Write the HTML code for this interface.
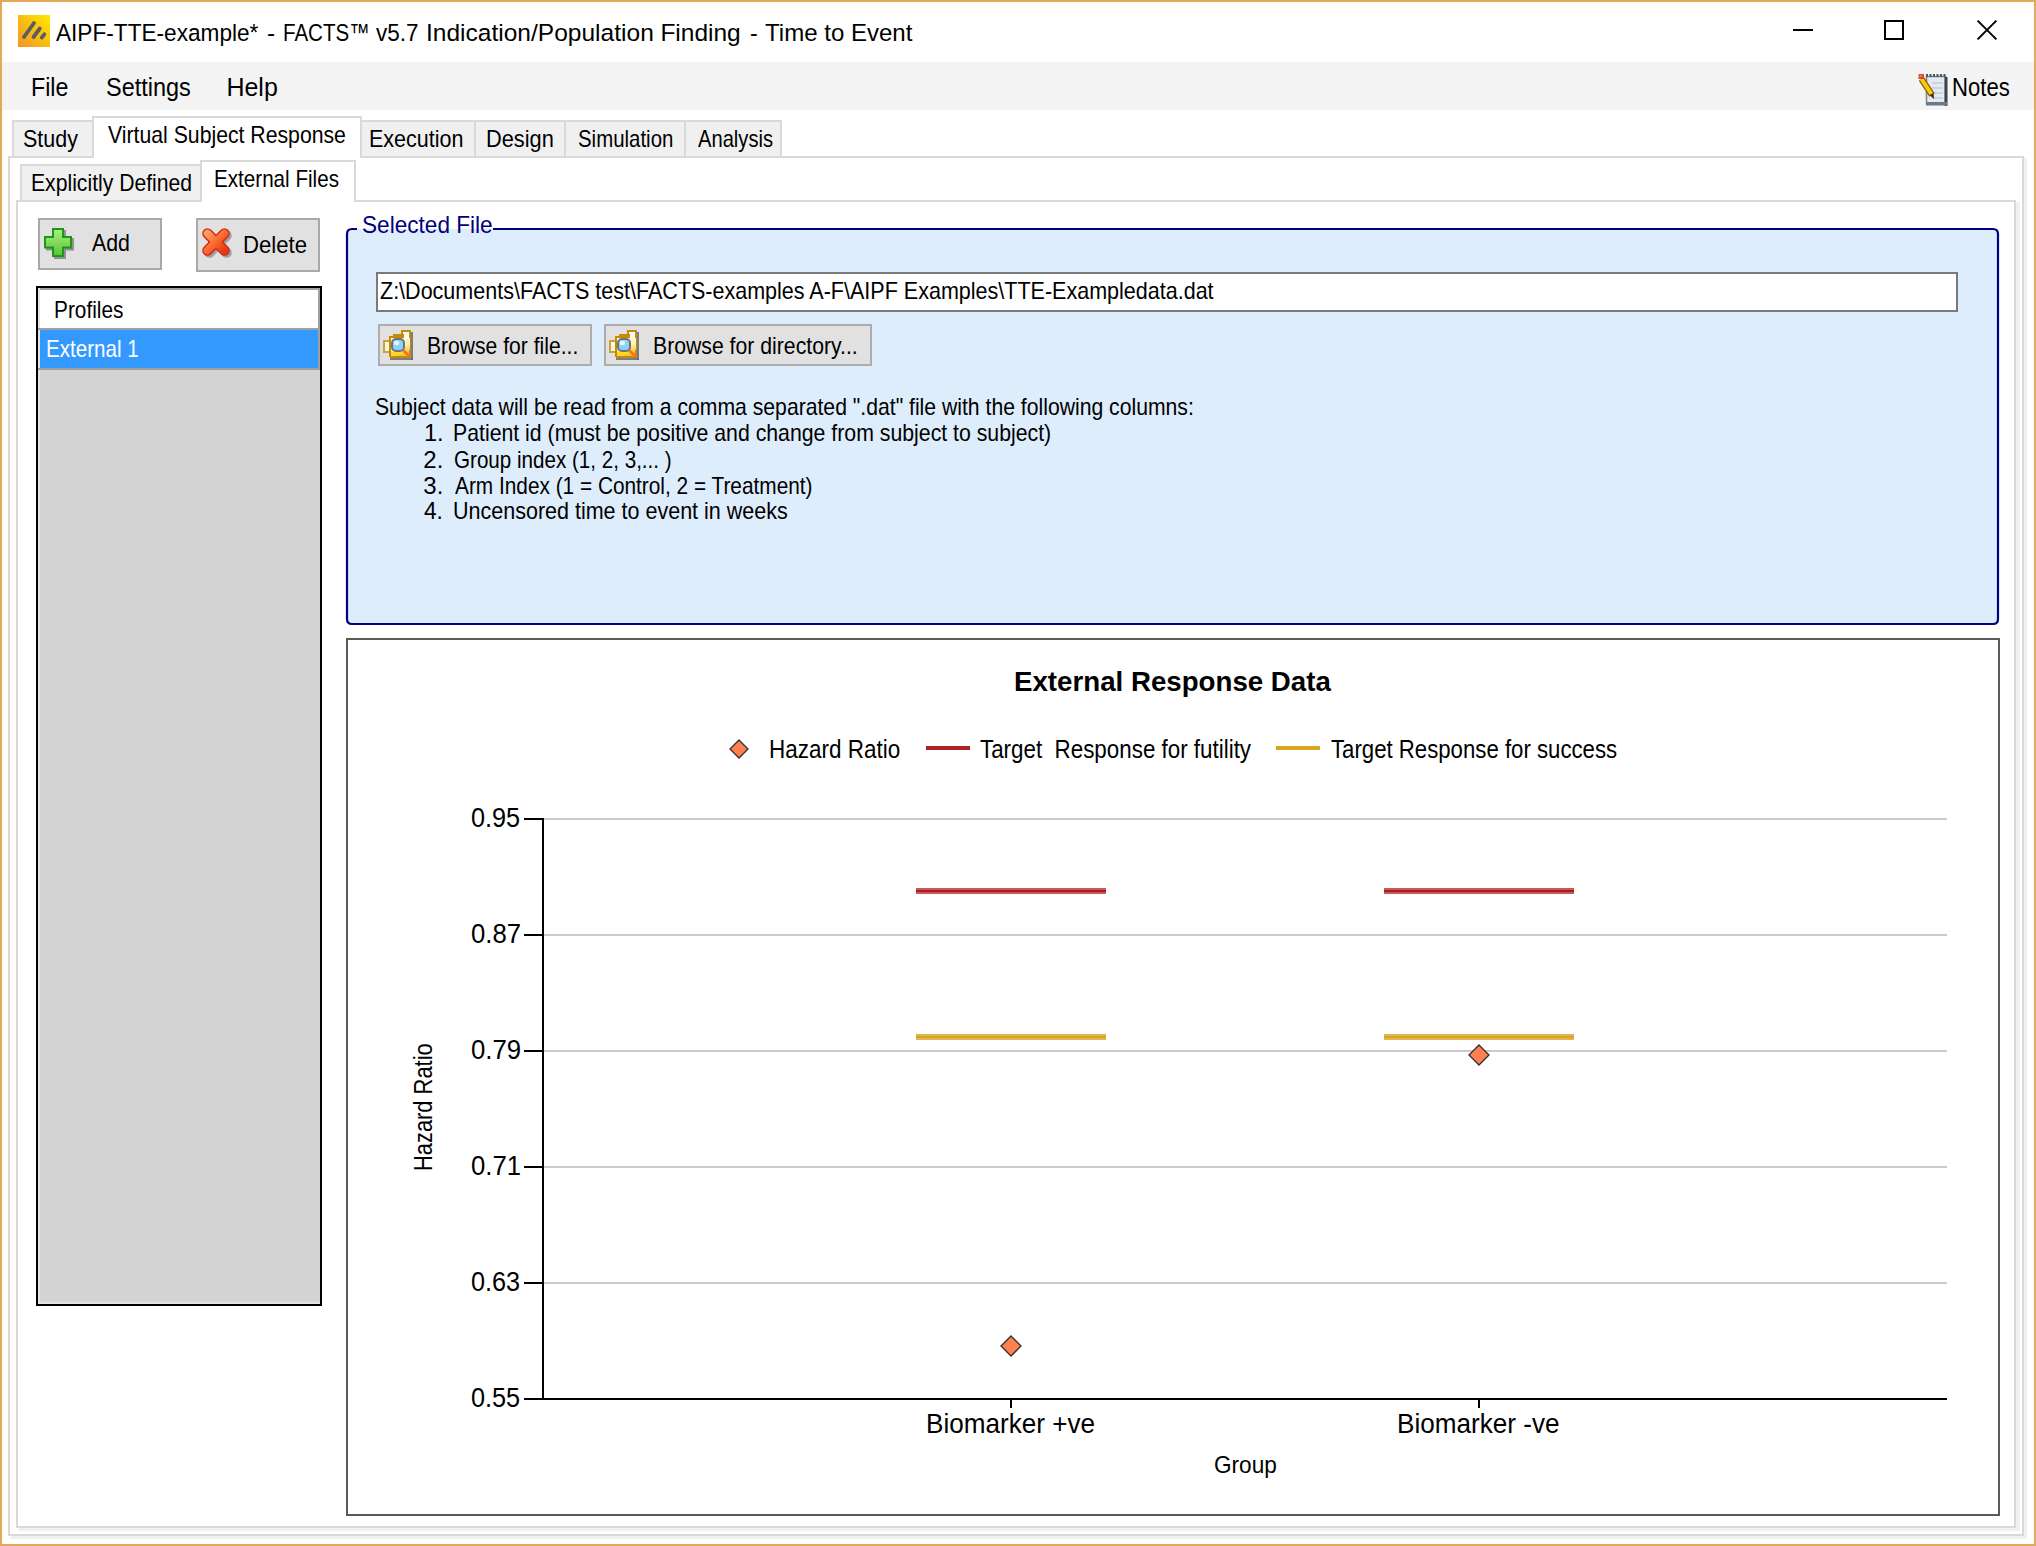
<!DOCTYPE html>
<html><head><meta charset="utf-8"><title>FACTS</title>
<style>html,body{margin:0;padding:0;width:2036px;height:1546px;overflow:hidden;font-family:"Liberation Sans", sans-serif;}</style>
</head><body><div style="position:relative;width:2036px;height:1546px;overflow:hidden">
<div style="position:absolute;left:0px;top:0px;width:2036px;height:1546px;background:#ffffff"></div>
<svg style="position:absolute;left:18px;top:15px" width="32" height="32" viewBox="0 0 32 32">
<defs><linearGradient id="ig" x1="0" y1="1" x2="1" y2="0"><stop offset="0" stop-color="#f39223"/><stop offset="1" stop-color="#ffea00"/></linearGradient></defs>
<rect width="32" height="32" fill="url(#ig)"/>
<g stroke="#5c5c5c" stroke-width="3.8" stroke-linecap="round">
<line x1="6" y1="22" x2="16" y2="8"/><line x1="15.5" y1="22" x2="21.8" y2="13.5"/><line x1="23.8" y1="22.5" x2="26.3" y2="19.3"/></g></svg>
<div style="position:absolute;left:55.6px;top:21.26px;font-size:24.5px;line-height:24.5px;font-weight:normal;color:#000;white-space:pre;transform:scaleX(0.9233);transform-origin:0 0;">AIPF-TTE-example*</div>
<div style="position:absolute;left:267.0px;top:21.26px;font-size:24.5px;line-height:24.5px;font-weight:normal;color:#000;white-space:pre;transform:scaleX(1.0000);transform-origin:0 0;">-</div>
<div style="position:absolute;left:282.62323232323234px;top:21.26px;font-size:24.5px;line-height:24.5px;font-weight:normal;color:#000;white-space:pre;transform:scaleX(0.8384);transform-origin:0 0;">FACTS™</div>
<div style="position:absolute;left:376.1px;top:21.26px;font-size:24.5px;line-height:24.5px;font-weight:normal;color:#000;white-space:pre;transform:scaleX(0.9178);transform-origin:0 0;">v5.7</div>
<div style="position:absolute;left:426.3973214285714px;top:21.26px;font-size:24.5px;line-height:24.5px;font-weight:normal;color:#000;white-space:pre;transform:scaleX(1.0013);transform-origin:0 0;">Indication/Population</div>
<div style="position:absolute;left:660.4px;top:21.26px;font-size:24.5px;line-height:24.5px;font-weight:normal;color:#000;white-space:pre;transform:scaleX(1.0000);transform-origin:0 0;">Finding</div>
<div style="position:absolute;left:749.75px;top:21.26px;font-size:24.5px;line-height:24.5px;font-weight:normal;color:#000;white-space:pre;transform:scaleX(0.9500);transform-origin:0 0;">-</div>
<div style="position:absolute;left:765.3px;top:21.26px;font-size:24.5px;line-height:24.5px;font-weight:normal;color:#000;white-space:pre;transform:scaleX(0.9813);transform-origin:0 0;">Time to Event</div>
<div style="position:absolute;left:1793px;top:29px;width:20px;height:2px;background:#000"></div>
<div style="position:absolute;left:1884px;top:20px;width:20px;height:20px;border:2px solid #000;box-sizing:border-box"></div>
<svg style="position:absolute;left:1976px;top:19px" width="22" height="22" viewBox="0 0 22 22"><g stroke="#000" stroke-width="2"><line x1="1.6" y1="1.6" x2="20.4" y2="20.4"/><line x1="20.4" y1="1.6" x2="1.6" y2="20.4"/></g></svg>
<div style="position:absolute;left:2px;top:62px;width:2032px;height:48px;background:#f4f4f4"></div>
<div style="position:absolute;left:31.142105263157895px;top:74.64px;font-size:25px;line-height:25px;font-weight:normal;color:#000;white-space:pre;transform:scaleX(0.9289);transform-origin:0 0;">File</div>
<div style="position:absolute;left:105.56179775280899px;top:74.64px;font-size:25px;line-height:25px;font-weight:normal;color:#000;white-space:pre;transform:scaleX(0.9382);transform-origin:0 0;">Settings</div>
<div style="position:absolute;left:226.4px;top:74.64px;font-size:25px;line-height:25px;font-weight:normal;color:#000;white-space:pre;transform:scaleX(1.0000);transform-origin:0 0;">Help</div>
<div style="position:absolute;left:1952.231746031746px;top:74.64px;font-size:25px;line-height:25px;font-weight:normal;color:#000;white-space:pre;transform:scaleX(0.8841);transform-origin:0 0;">Notes</div>
<svg style="position:absolute;left:1917px;top:73px" width="34" height="34" viewBox="0 0 34 34">
<rect x="9.5" y="3.5" width="19" height="27" fill="#e4e9f2" stroke="#7a8390" stroke-width="1.5"/>
<rect x="27.5" y="4" width="3" height="29" fill="#3a424c"/>
<rect x="9" y="29" width="21" height="3.5" fill="#6d7886"/>
<g stroke="#c3cbd9" stroke-width="1.5"><line x1="15" y1="10" x2="26" y2="10"/><line x1="15" y1="15" x2="26" y2="15"/><line x1="15" y1="20" x2="26" y2="20"/><line x1="15" y1="25" x2="26" y2="25"/></g>
<line x1="9" y1="2.5" x2="29" y2="2.5" stroke="#4e5660" stroke-width="3" stroke-dasharray="2 1.5"/>
<line x1="4.5" y1="6" x2="15" y2="22" stroke="#8a6000" stroke-width="6.5"/>
<line x1="4.5" y1="6" x2="15" y2="22" stroke="#f6cc10" stroke-width="4"/>
<path d="M12.5 22 L16.5 20 L17 26 Z" fill="#3a2a10"/>
<rect x="1.5" y="1" width="5.5" height="5" fill="#d8493a"/><rect x="2.5" y="2" width="2.5" height="2" fill="#ff7060"/>
</svg>
<div style="position:absolute;left:8px;top:156px;width:2016px;height:1380px;border:2px solid #d9d9d9;box-sizing:border-box;background:#fff"></div>
<div style="position:absolute;left:2024px;top:158px;width:3px;height:1380px;background:#f0f0f0"></div>
<div style="position:absolute;left:10px;top:1536px;width:2017px;height:3px;background:#f0f0f0"></div>
<div style="position:absolute;left:12px;top:120px;width:82px;height:38px;background:#f0f0f0;border:2px solid #d9d9d9;box-sizing:border-box"></div>
<div style="position:absolute;left:23.205000000000002px;top:127.48px;font-size:24px;line-height:24px;font-weight:normal;color:#000;white-space:pre;transform:scaleX(0.8950);transform-origin:0 0;">Study</div>
<div style="position:absolute;left:360px;top:120px;width:116px;height:38px;background:#f0f0f0;border:2px solid #d9d9d9;box-sizing:border-box"></div>
<div style="position:absolute;left:369.0078431372549px;top:127.18px;font-size:24px;line-height:24px;font-weight:normal;color:#000;white-space:pre;transform:scaleX(0.8961);transform-origin:0 0;">Execution</div>
<div style="position:absolute;left:474px;top:120px;width:92px;height:38px;background:#f0f0f0;border:2px solid #d9d9d9;box-sizing:border-box"></div>
<div style="position:absolute;left:486.18591549295775px;top:127.18px;font-size:24px;line-height:24px;font-weight:normal;color:#000;white-space:pre;transform:scaleX(0.9070);transform-origin:0 0;">Design</div>
<div style="position:absolute;left:564px;top:120px;width:122px;height:38px;background:#f0f0f0;border:2px solid #d9d9d9;box-sizing:border-box"></div>
<div style="position:absolute;left:577.5490909090909px;top:127.18px;font-size:24px;line-height:24px;font-weight:normal;color:#000;white-space:pre;transform:scaleX(0.8509);transform-origin:0 0;">Simulation</div>
<div style="position:absolute;left:684px;top:120px;width:98px;height:38px;background:#f0f0f0;border:2px solid #d9d9d9;box-sizing:border-box"></div>
<div style="position:absolute;left:698.0px;top:127.18px;font-size:24px;line-height:24px;font-weight:normal;color:#000;white-space:pre;transform:scaleX(0.8393);transform-origin:0 0;">Analysis</div>
<div style="position:absolute;left:92px;top:116px;width:270px;height:42px;background:#ffffff;border:2px solid #d9d9d9;border-bottom:none;box-sizing:border-box"></div>
<div style="position:absolute;left:108.0px;top:123.08px;font-size:24px;line-height:24px;font-weight:normal;color:#000;white-space:pre;transform:scaleX(0.8843);transform-origin:0 0;">Virtual Subject Response</div>
<div style="position:absolute;left:16px;top:200px;width:2000px;height:1328px;border:2px solid #d9d9d9;box-sizing:border-box;background:#fff"></div>
<div style="position:absolute;left:2016px;top:202px;width:4px;height:1328px;background:#f0f0f0"></div>
<div style="position:absolute;left:18px;top:1528px;width:2002px;height:3px;background:#f0f0f0"></div>
<div style="position:absolute;left:20px;top:164px;width:182px;height:38px;background:#f0f0f0;border:2px solid #d9d9d9;box-sizing:border-box"></div>
<div style="position:absolute;left:30.636871508379887px;top:170.68px;font-size:24px;line-height:24px;font-weight:normal;color:#000;white-space:pre;transform:scaleX(0.8816);transform-origin:0 0;">Explicitly Defined</div>
<div style="position:absolute;left:200px;top:160px;width:156px;height:42px;background:#ffffff;border:2px solid #d9d9d9;border-bottom:none;box-sizing:border-box"></div>
<div style="position:absolute;left:214.28111888111889px;top:166.68px;font-size:24px;line-height:24px;font-weight:normal;color:#000;white-space:pre;transform:scaleX(0.8594);transform-origin:0 0;">External Files</div>
<div style="position:absolute;left:38px;top:218px;width:124px;height:52px;background:#e1e1e1;border:2px solid #a9a9a9;box-sizing:border-box"></div>
<div style="position:absolute;left:196px;top:218px;width:124px;height:54px;background:#e1e1e1;border:2px solid #a9a9a9;box-sizing:border-box"></div>
<svg style="position:absolute;left:42px;top:226px" width="36" height="36" viewBox="0 0 36 36">
<defs><linearGradient id="pg" x1="0" y1="0" x2="0" y2="1"><stop offset="0" stop-color="#a8f07a"/><stop offset="1" stop-color="#5cc43a"/></linearGradient></defs>
<path d="M10 2h12v8h8v12.5h-8v8.5h-12v-8.5h-8v-12.5h8z" transform="translate(2,2)" fill="#444" opacity="0.5"/>
<path d="M10 2h12v8h8v12.5h-8v8.5h-12v-8.5h-8v-12.5h8z" fill="#1e961e"/>
<path d="M12 4h8v8h8v8.5h-8v8.5h-8v-8.5h-8v-8.5h8z" fill="url(#pg)"/>
</svg>
<div style="position:absolute;left:92.0px;top:231.38px;font-size:24px;line-height:24px;font-weight:normal;color:#000;white-space:pre;transform:scaleX(0.8878);transform-origin:0 0;">Add</div>
<svg style="position:absolute;left:200px;top:226px" width="36" height="36" viewBox="0 0 36 36">
<defs><linearGradient id="xg" x1="0" y1="0" x2="1" y2="1"><stop offset="0" stop-color="#ff9c60"/><stop offset="0.5" stop-color="#fb6a2c"/><stop offset="1" stop-color="#e83a12"/></linearGradient></defs>
<g stroke-linecap="round">
<g stroke="#444" stroke-width="10.5" opacity="0.4"><line x1="9.5" y1="9.5" x2="26.5" y2="26.5"/><line x1="26.5" y1="9.5" x2="9.5" y2="26.5"/></g>
<g stroke="#cf2a1a" stroke-width="10.5"><line x1="7.5" y1="7.5" x2="24.5" y2="24.5"/><line x1="24.5" y1="7.5" x2="7.5" y2="24.5"/></g>
<g stroke="url(#xg)" stroke-width="7.5"><line x1="7.5" y1="7.5" x2="24.5" y2="24.5"/><line x1="24.5" y1="7.5" x2="7.5" y2="24.5"/></g>
</g></svg>
<div style="position:absolute;left:242.65454545454546px;top:233.28px;font-size:24px;line-height:24px;font-weight:normal;color:#000;white-space:pre;transform:scaleX(0.9227);transform-origin:0 0;">Delete</div>
<div style="position:absolute;left:36px;top:286px;width:286px;height:1020px;background:#d3d3d3;border:2px solid #000;box-sizing:border-box"></div>
<div style="position:absolute;left:38px;top:288px;width:282px;height:2px;background:#a0a0a0"></div>
<div style="position:absolute;left:38px;top:288px;width:2px;height:1016px;background:#e3e3e3"></div>
<div style="position:absolute;left:40px;top:290px;width:279px;height:38px;background:#ffffff"></div>
<div style="position:absolute;left:38px;top:328px;width:282px;height:2px;background:#a0a0a0"></div>
<div style="position:absolute;left:40px;top:330px;width:279px;height:38px;background:#3399ff"></div>
<div style="position:absolute;left:38px;top:368px;width:282px;height:2px;background:#a0a0a0"></div>
<div style="position:absolute;left:318px;top:290px;width:2px;height:78px;background:#a0a0a0"></div>
<div style="position:absolute;left:38px;top:1302px;width:282px;height:2px;background:#e3e3e3"></div>
<div style="position:absolute;left:54.164935064935065px;top:297.68px;font-size:24px;line-height:24px;font-weight:normal;color:#000;white-space:pre;transform:scaleX(0.8675);transform-origin:0 0;">Profiles</div>
<div style="position:absolute;left:45.885714285714286px;top:337.38px;font-size:24px;line-height:24px;font-weight:normal;color:#ffffff;white-space:pre;transform:scaleX(0.8571);transform-origin:0 0;">External 1</div>
<svg style="position:absolute;left:345px;top:227px" width="1656" height="400" viewBox="0 0 1656 400">
<path d="M 12 2 L 7 2 Q 2 2 2 7 L 2 392 Q 2 397 7 397 L 1648 397 Q 1653 397 1653 392 L 1653 7 Q 1653 2 1648 2 L 148 2" fill="#deedfc" stroke="#000080" stroke-width="2.2"/>
</svg>
<div style="position:absolute;left:376px;top:272px;width:1582px;height:40px;background:#fff;border:2px solid #7a7a7a;box-sizing:border-box"></div>
<div style="position:absolute;left:362.4583941605839px;top:213.18px;font-size:24px;line-height:24px;font-weight:normal;color:#000080;white-space:pre;transform:scaleX(0.9416);transform-origin:0 0;">Selected File</div>
<div style="position:absolute;left:380.10333692142086px;top:279.48px;font-size:24px;line-height:24px;font-weight:normal;color:#000;white-space:pre;transform:scaleX(0.8967);transform-origin:0 0;">Z:\Documents\FACTS test\FACTS-examples A-F\AIPF Examples\TTE-Exampledata.dat</div>
<div style="position:absolute;left:378px;top:324px;width:214px;height:42px;background:#e1e1e1;border:2px solid #adadad;box-sizing:border-box"></div>
<div style="position:absolute;left:604px;top:324px;width:268px;height:42px;background:#e1e1e1;border:2px solid #adadad;box-sizing:border-box"></div>
<svg style="position:absolute;left:383px;top:330px" width="32" height="32" viewBox="0 0 32 32">
<defs><linearGradient id="fg383" x1="0" y1="0" x2="0.3" y2="1"><stop offset="0" stop-color="#fffef5"/><stop offset="0.55" stop-color="#fff0a8"/><stop offset="1" stop-color="#f5c030"/></linearGradient></defs>
<rect x="28" y="2" width="2" height="28" fill="#60656c" opacity="0.8"/>
<rect x="7" y="28" width="23" height="2" fill="#60656c" opacity="0.8"/>
<rect x="19" y="1" width="8" height="26" fill="#fffdf2" stroke="#c48a08" stroke-width="2"/>
<rect x="11" y="5" width="9" height="22" fill="#fff4c8" stroke="#c48a08" stroke-width="2"/>
<rect x="1" y="11" width="6" height="11" fill="#fff8dc" stroke="#c8a040" stroke-width="2"/>
<path d="M7 27 V7 H21" fill="none" stroke="#c48a08" stroke-width="2"/>
<rect x="8" y="8" width="19" height="19" fill="url(#fg383)"/>
<path d="M7 27 H27 V20" fill="none" stroke="#c48a08" stroke-width="2"/>
<rect x="9" y="9" width="12" height="12" rx="4" fill="#8ad4fa" stroke="#727272" stroke-width="2"/>
<rect x="11" y="11" width="5" height="4" rx="1" fill="#e0f6ff"/>
<rect x="8" y="22" width="11" height="2.5" fill="#ffd820"/>
<path d="M20.5 20.5 L26 26" stroke="#ff7020" stroke-width="3"/>
</svg>
<svg style="position:absolute;left:609px;top:330px" width="32" height="32" viewBox="0 0 32 32">
<defs><linearGradient id="fg609" x1="0" y1="0" x2="0.3" y2="1"><stop offset="0" stop-color="#fffef5"/><stop offset="0.55" stop-color="#fff0a8"/><stop offset="1" stop-color="#f5c030"/></linearGradient></defs>
<rect x="28" y="2" width="2" height="28" fill="#60656c" opacity="0.8"/>
<rect x="7" y="28" width="23" height="2" fill="#60656c" opacity="0.8"/>
<rect x="19" y="1" width="8" height="26" fill="#fffdf2" stroke="#c48a08" stroke-width="2"/>
<rect x="11" y="5" width="9" height="22" fill="#fff4c8" stroke="#c48a08" stroke-width="2"/>
<rect x="1" y="11" width="6" height="11" fill="#fff8dc" stroke="#c8a040" stroke-width="2"/>
<path d="M7 27 V7 H21" fill="none" stroke="#c48a08" stroke-width="2"/>
<rect x="8" y="8" width="19" height="19" fill="url(#fg609)"/>
<path d="M7 27 H27 V20" fill="none" stroke="#c48a08" stroke-width="2"/>
<rect x="9" y="9" width="12" height="12" rx="4" fill="#8ad4fa" stroke="#727272" stroke-width="2"/>
<rect x="11" y="11" width="5" height="4" rx="1" fill="#e0f6ff"/>
<rect x="8" y="22" width="11" height="2.5" fill="#ffd820"/>
<path d="M20.5 20.5 L26 26" stroke="#ff7020" stroke-width="3"/>
</svg>
<div style="position:absolute;left:426.8416666666667px;top:333.68px;font-size:24px;line-height:24px;font-weight:normal;color:#000;white-space:pre;transform:scaleX(0.8792);transform-origin:0 0;">Browse for file...</div>
<div style="position:absolute;left:653.2324561403509px;top:333.68px;font-size:24px;line-height:24px;font-weight:normal;color:#000;white-space:pre;transform:scaleX(0.8838);transform-origin:0 0;">Browse for directory...</div>
<div style="position:absolute;left:375.11783783783784px;top:395.48px;font-size:24px;line-height:24px;font-weight:normal;color:#000;white-space:pre;transform:scaleX(0.8822);transform-origin:0 0;">Subject data will be read from a comma separated &quot;.dat&quot; file with the following columns:</div>
<div style="position:absolute;left:423.5375px;top:421.38px;font-size:24px;line-height:24px;font-weight:normal;color:#000;white-space:pre;transform:scaleX(0.9812);transform-origin:0 0;">1.</div>
<div style="position:absolute;left:452.72767857142856px;top:421.38px;font-size:24px;line-height:24px;font-weight:normal;color:#000;white-space:pre;transform:scaleX(0.8862);transform-origin:0 0;">Patient id (must be positive and change from subject to subject)</div>
<div style="position:absolute;left:423.3px;top:447.58px;font-size:24px;line-height:24px;font-weight:normal;color:#000;white-space:pre;transform:scaleX(1.0000);transform-origin:0 0;">2.</div>
<div style="position:absolute;left:453.6414342629482px;top:447.58px;font-size:24px;line-height:24px;font-weight:normal;color:#000;white-space:pre;transform:scaleX(0.8586);transform-origin:0 0;">Group index (1, 2, 3,... )</div>
<div style="position:absolute;left:423.3px;top:473.58px;font-size:24px;line-height:24px;font-weight:normal;color:#000;white-space:pre;transform:scaleX(1.0000);transform-origin:0 0;">3.</div>
<div style="position:absolute;left:454.5px;top:473.58px;font-size:24px;line-height:24px;font-weight:normal;color:#000;white-space:pre;transform:scaleX(0.8674);transform-origin:0 0;">Arm Index (1 = Control, 2 = Treatment)</div>
<div style="position:absolute;left:424.3px;top:499.18px;font-size:24px;line-height:24px;font-weight:normal;color:#000;white-space:pre;transform:scaleX(0.9444);transform-origin:0 0;">4.</div>
<div style="position:absolute;left:452.70754716981133px;top:499.18px;font-size:24px;line-height:24px;font-weight:normal;color:#000;white-space:pre;transform:scaleX(0.8962);transform-origin:0 0;">Uncensored time to event in weeks</div>
<div style="position:absolute;left:346px;top:638px;width:1654px;height:878px;background:#fff;border:2px solid #5a5a5a;box-sizing:border-box"></div>
<div style="position:absolute;left:1013.7231974921631px;top:668.10px;font-size:28px;line-height:28px;font-weight:bold;color:#000;white-space:pre;transform:scaleX(0.9884);transform-origin:0 0;">External Response Data</div>
<svg style="position:absolute;left:729px;top:739px" width="20" height="20" viewBox="0 0 20 20"><path d="M10 1 L19 10 L10 19 L1 10 Z" fill="#ff7f50" stroke="#303030" stroke-width="1.3"/></svg>
<div style="position:absolute;left:769.2711409395973px;top:735.99px;font-size:26px;line-height:26px;font-weight:normal;color:#000;white-space:pre;transform:scaleX(0.8644);transform-origin:0 0;">Hazard Ratio</div>
<div style="position:absolute;left:926px;top:746px;width:44px;height:4px;background:#b22222"></div>
<div style="position:absolute;left:980.0px;top:735.99px;font-size:26px;line-height:26px;font-weight:normal;color:#000;white-space:pre;transform:scaleX(0.8603);transform-origin:0 0;">Target  Response for futility</div>
<div style="position:absolute;left:1276px;top:746px;width:44px;height:4px;background:#daa520"></div>
<div style="position:absolute;left:1331.0px;top:735.99px;font-size:26px;line-height:26px;font-weight:normal;color:#000;white-space:pre;transform:scaleX(0.8533);transform-origin:0 0;">Target Response for success</div>
<div style="position:absolute;left:544px;top:818px;width:1403px;height:2px;background:#cbcbcb"></div>
<div style="position:absolute;left:524px;top:818px;width:20px;height:2px;background:#000"></div>
<div style="position:absolute;left:471.09811320754716px;top:804.30px;font-size:28px;line-height:28px;font-weight:normal;color:#000;white-space:pre;transform:scaleX(0.9019);transform-origin:0 0;">0.95</div>
<div style="position:absolute;left:544px;top:934px;width:1403px;height:2px;background:#cbcbcb"></div>
<div style="position:absolute;left:524px;top:934px;width:20px;height:2px;background:#000"></div>
<div style="position:absolute;left:471.08076923076925px;top:920.30px;font-size:28px;line-height:28px;font-weight:normal;color:#000;white-space:pre;transform:scaleX(0.9192);transform-origin:0 0;">0.87</div>
<div style="position:absolute;left:544px;top:1050px;width:1403px;height:2px;background:#cbcbcb"></div>
<div style="position:absolute;left:524px;top:1050px;width:20px;height:2px;background:#000"></div>
<div style="position:absolute;left:471.08076923076925px;top:1036.30px;font-size:28px;line-height:28px;font-weight:normal;color:#000;white-space:pre;transform:scaleX(0.9192);transform-origin:0 0;">0.79</div>
<div style="position:absolute;left:544px;top:1166px;width:1403px;height:2px;background:#cbcbcb"></div>
<div style="position:absolute;left:524px;top:1166px;width:20px;height:2px;background:#000"></div>
<div style="position:absolute;left:471.08076923076925px;top:1152.30px;font-size:28px;line-height:28px;font-weight:normal;color:#000;white-space:pre;transform:scaleX(0.9192);transform-origin:0 0;">0.71</div>
<div style="position:absolute;left:544px;top:1282px;width:1403px;height:2px;background:#cbcbcb"></div>
<div style="position:absolute;left:524px;top:1282px;width:20px;height:2px;background:#000"></div>
<div style="position:absolute;left:471.09811320754716px;top:1268.30px;font-size:28px;line-height:28px;font-weight:normal;color:#000;white-space:pre;transform:scaleX(0.9019);transform-origin:0 0;">0.63</div>
<div style="position:absolute;left:471.09811320754716px;top:1384.30px;font-size:28px;line-height:28px;font-weight:normal;color:#000;white-space:pre;transform:scaleX(0.9019);transform-origin:0 0;">0.55</div>
<div style="position:absolute;left:524px;top:1398px;width:20px;height:2px;background:#000"></div>
<div style="position:absolute;left:542px;top:818px;width:2px;height:582px;background:#000"></div>
<div style="position:absolute;left:542px;top:1398px;width:1405px;height:2px;background:#000"></div>
<div style="position:absolute;left:1010px;top:1400px;width:2px;height:8px;background:#000"></div>
<div style="position:absolute;left:1478px;top:1400px;width:2px;height:8px;background:#000"></div>
<div style="position:absolute;left:925.6348314606741px;top:1410.00px;font-size:28px;line-height:28px;font-weight:normal;color:#000;white-space:pre;transform:scaleX(0.9326);transform-origin:0 0;">Biomarker +ve</div>
<div style="position:absolute;left:1396.7356725146199px;top:1410.00px;font-size:28px;line-height:28px;font-weight:normal;color:#000;white-space:pre;transform:scaleX(0.9322);transform-origin:0 0;">Biomarker -ve</div>
<div style="position:absolute;left:1213.7584615384617px;top:1452.88px;font-size:24px;line-height:24px;font-weight:normal;color:#000;white-space:pre;transform:scaleX(0.9415);transform-origin:0 0;">Group</div>
<div style="position:absolute;left:916px;top:888px;width:190px;height:6px;background:#c55a5a"></div>
<div style="position:absolute;left:916px;top:890px;width:190px;height:2px;background:#b01c1e"></div>
<div style="position:absolute;left:916px;top:1034px;width:190px;height:6px;background:#e0b655"></div>
<div style="position:absolute;left:916px;top:1036px;width:190px;height:2px;background:#d9a31a"></div>
<div style="position:absolute;left:1384px;top:888px;width:190px;height:6px;background:#c55a5a"></div>
<div style="position:absolute;left:1384px;top:890px;width:190px;height:2px;background:#b01c1e"></div>
<div style="position:absolute;left:1384px;top:1034px;width:190px;height:6px;background:#e0b655"></div>
<div style="position:absolute;left:1384px;top:1036px;width:190px;height:2px;background:#d9a31a"></div>
<svg style="position:absolute;left:1000px;top:1335px" width="22" height="22" viewBox="0 0 22 22"><path d="M11 1 L21 11 L11 21 L1 11 Z" fill="#ff7f50" stroke="#303030" stroke-width="1.3"/></svg>
<svg style="position:absolute;left:1468px;top:1044px" width="22" height="22" viewBox="0 0 22 22"><path d="M11 1 L21 11 L11 21 L1 11 Z" fill="#ff7f50" stroke="#303030" stroke-width="1.3"/></svg>
<div style="position:absolute;left:0px;top:0px;width:2036px;height:2px;background:#e4a85b"></div>
<div style="position:absolute;left:0px;top:1544px;width:2036px;height:2px;background:#e4a85b"></div>
<div style="position:absolute;left:0px;top:0px;width:2px;height:1546px;background:#e4a85b"></div>
<div style="position:absolute;left:2034px;top:0px;width:2px;height:1546px;background:#e4a85b"></div>
<div style="position:absolute;left:410.84px;top:1171px;width:0;height:0"><div style="position:absolute;left:0;top:0;transform:rotate(-90deg) scaleX(0.875);transform-origin:0 0;font-size:25px;line-height:25px;white-space:pre;color:#000">Hazard Ratio</div></div>
</div></body></html>
